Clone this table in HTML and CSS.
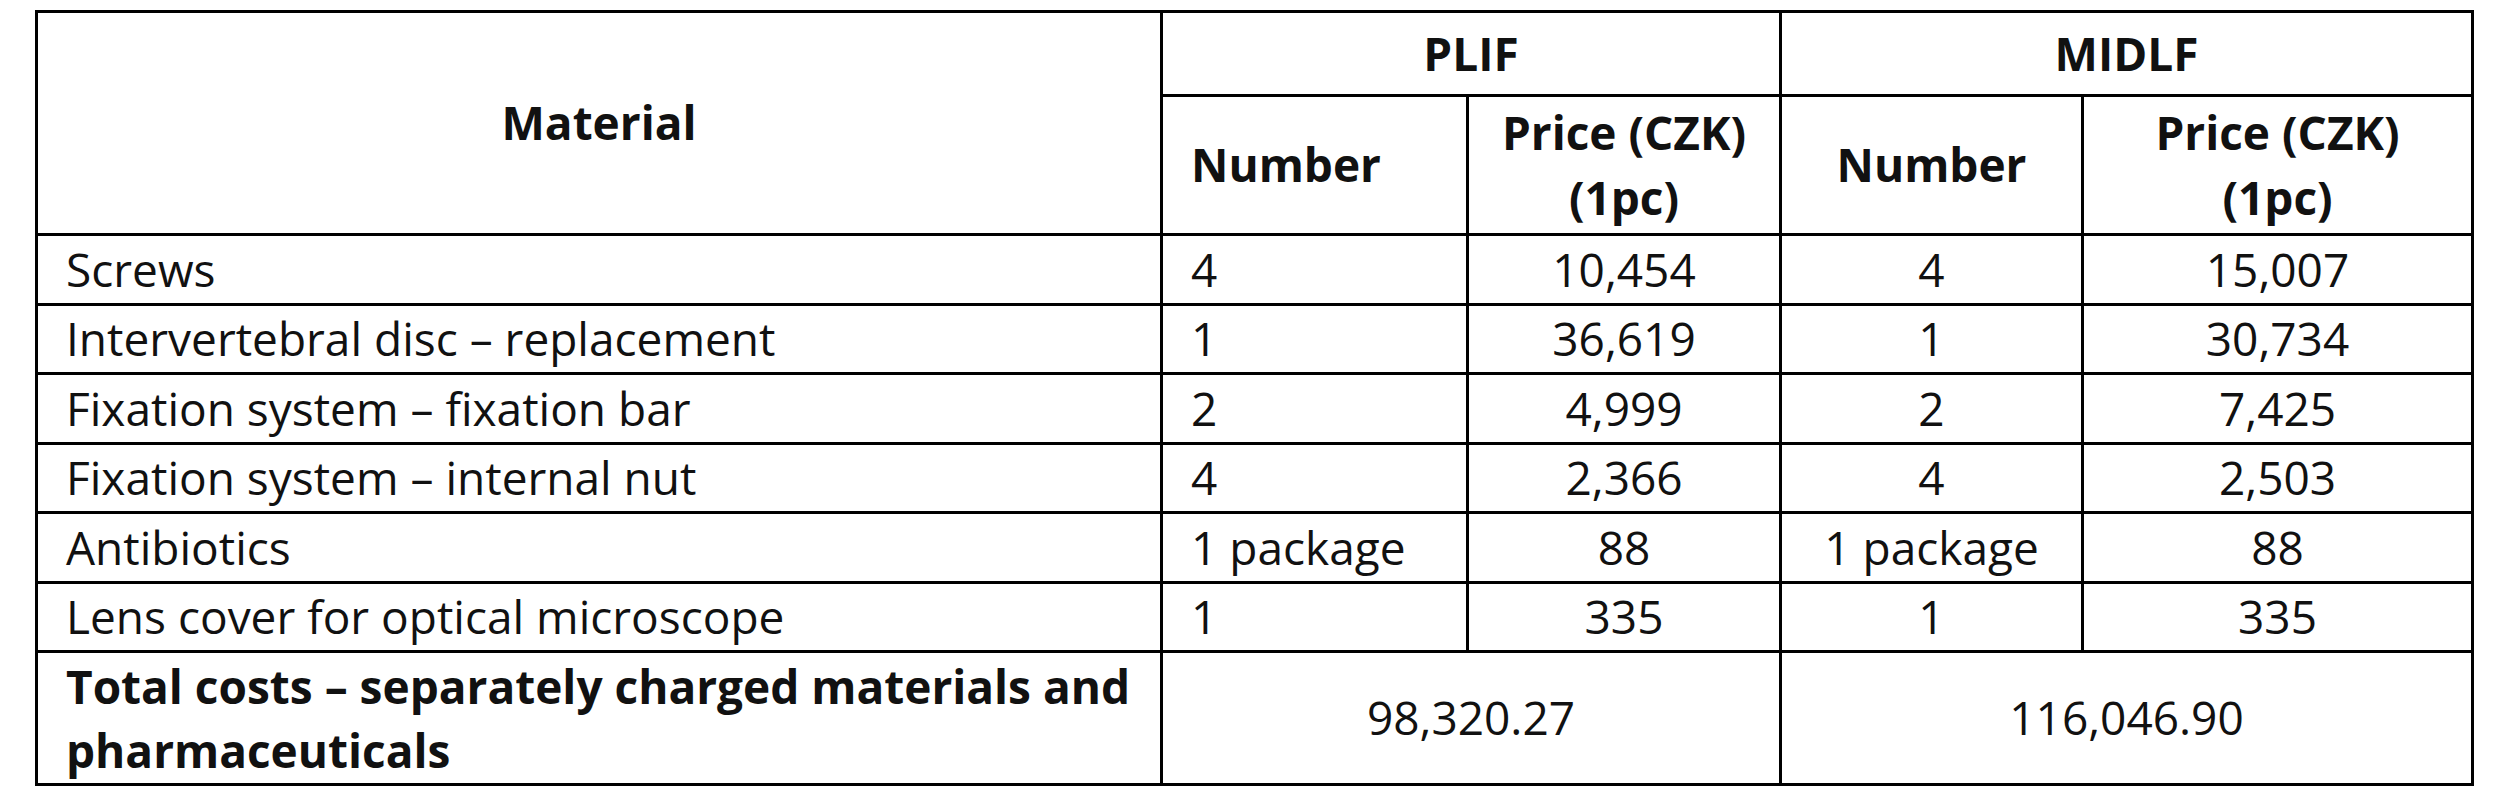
FILE: index.html
```html
<!DOCTYPE html>
<html lang="en">
<head>
<meta charset="utf-8">
<title>Material costs – PLIF vs MIDLF</title>
<link rel="stylesheet" href="styles.css">
</head>
<body>
<table class="cost-table">
  <colgroup>
    <col class="col-material">
    <col class="col-num-a">
    <col class="col-price-a">
    <col class="col-num-b">
    <col class="col-price-b">
  </colgroup>
  <tr class="row-head-1">
    <th class="head center" rowspan="2">Material</th>
    <th class="head center" colspan="2">PLIF</th>
    <th class="head center" colspan="2">MIDLF</th>
  </tr>
  <tr class="row-head-2">
    <th class="head">Number</th>
    <th class="head center two-line">Price (CZK)<br>(1pc)</th>
    <th class="head center">Number</th>
    <th class="head center two-line">Price (CZK)<br>(1pc)</th>
  </tr>
  <tr class="row">
    <td>Screws</td>
    <td>4</td>
    <td class="center">10,454</td>
    <td class="center">4</td>
    <td class="center">15,007</td>
  </tr>
  <tr class="row">
    <td>Intervertebral disc – replacement</td>
    <td>1</td>
    <td class="center">36,619</td>
    <td class="center">1</td>
    <td class="center">30,734</td>
  </tr>
  <tr class="row">
    <td>Fixation system – fixation bar</td>
    <td>2</td>
    <td class="center">4,999</td>
    <td class="center">2</td>
    <td class="center">7,425</td>
  </tr>
  <tr class="row">
    <td>Fixation system – internal nut</td>
    <td>4</td>
    <td class="center">2,366</td>
    <td class="center">4</td>
    <td class="center">2,503</td>
  </tr>
  <tr class="row">
    <td>Antibiotics</td>
    <td>1 package</td>
    <td class="center">88</td>
    <td class="center">1 package</td>
    <td class="center">88</td>
  </tr>
  <tr class="row">
    <td>Lens cover for optical microscope</td>
    <td>1</td>
    <td class="center">335</td>
    <td class="center">1</td>
    <td class="center">335</td>
  </tr>
  <tr class="row-total">
    <td class="total-label">Total costs – separately charged materials and<br>pharmaceuticals</td>
    <td class="center" colspan="2">98,320.27</td>
    <td class="center" colspan="2">116,046.90</td>
  </tr>
</table>
</body>
</html>
```

FILE: styles.css
```css
html, body {
  margin: 0;
  padding: 0;
  background: #ffffff;
}

.cost-table {
  border-collapse: collapse;
  table-layout: fixed;
  width: 2436px;
  margin: 10px 0 0 35px;
  font-family: "Open Sans", "Lato", "Liberation Sans", sans-serif;
  font-size: 46px;
  color: #111111;
}

.col-material { width: 1125px; }
.col-num-a { width: 306px; }
.col-price-a { width: 313px; }
.col-num-b { width: 302px; }
.col-price-b { width: 390px; }

.cost-table th,
.cost-table td {
  border: 3px solid #000000;
  padding: 0 28px;
  line-height: 1.2;
  vertical-align: middle;
  text-align: left;
  font-weight: 400;
  white-space: nowrap;
}

.cost-table .head {
  font-weight: 700;
}

.cost-table .center {
  text-align: center;
}

.cost-table .two-line {
  line-height: 65px;
}

.row-head-1 { height: 84px; }
.row-head-2 { height: 139px; }
.row { height: 69.5px; }
.row-total { height: 133px; }

.cost-table .total-label {
  font-weight: 700;
  line-height: 64px;
}
```
